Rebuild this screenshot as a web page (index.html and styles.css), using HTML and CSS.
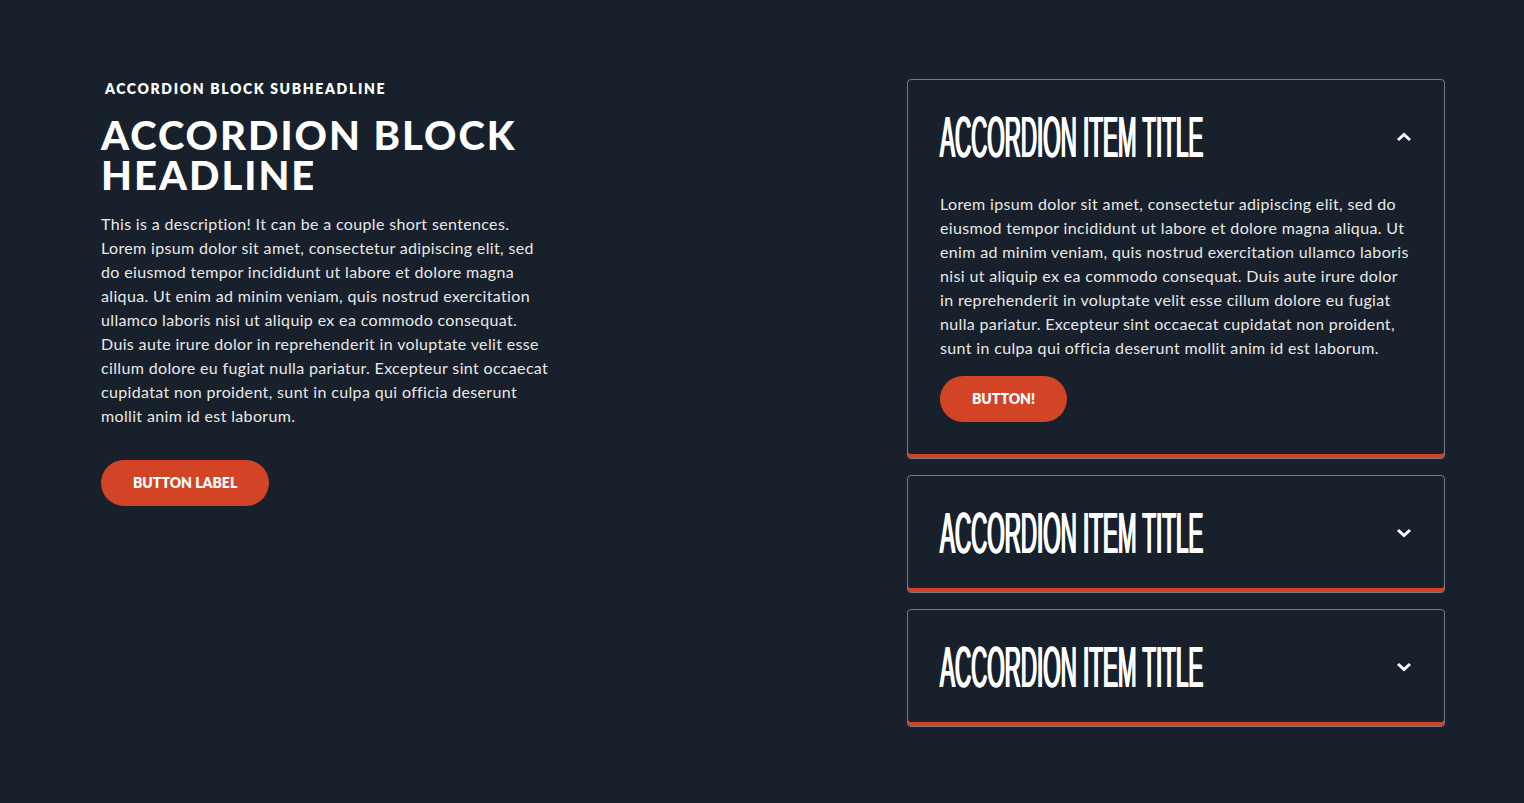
FILE: index.html
```html
<!DOCTYPE html>
<html lang="en">
  <head>
    <title>Accordion Block</title>
    <link rel="stylesheet" href="styles.css">
  </head>
  <body>
    <section class="block">
      <div class="intro">
        <h3 class="subhead">Accordion Block Subheadline</h3>
        <h1 class="headline">Accordion Block Headline</h1>
        <p class="desc">This is a description! It can be a couple short sentences. Lorem ipsum dolor sit amet, consectetur adipiscing elit, sed do eiusmod tempor incididunt ut labore et dolore magna aliqua. Ut enim ad minim veniam, quis nostrud exercitation ullamco laboris nisi ut aliquip ex ea commodo consequat. Duis aute irure dolor in reprehenderit in voluptate velit esse cillum dolore eu fugiat nulla pariatur. Excepteur sint occaecat cupidatat non proident, sunt in culpa qui officia deserunt mollit anim id est laborum.</p>
        <a class="btn" href="#">Button Label</a>
      </div>

      <div class="accordion">
        <div class="item open">
          <div class="item-head">
            <h2 class="item-title"><span>Accordion Item Title</span></h2>
            <svg class="chev" width="16" height="10" viewBox="0 0 16 10"><polyline points="2,8 8,2.5 14,8" fill="none" stroke="#fff" stroke-width="3"/></svg>
          </div>
          <div class="item-body">
            <p>Lorem ipsum dolor sit amet, consectetur adipiscing elit, sed do eiusmod tempor incididunt ut labore et dolore magna aliqua. Ut enim ad minim veniam, quis nostrud exercitation ullamco laboris nisi ut aliquip ex ea commodo consequat. Duis aute irure dolor in reprehenderit in voluptate velit esse cillum dolore eu fugiat nulla pariatur. Excepteur sint occaecat cupidatat non proident, sunt in culpa qui officia deserunt mollit anim id est laborum.</p>
            <a class="btn" href="#">Button!</a>
          </div>
        </div>
        <div class="item">
          <div class="item-head">
            <h2 class="item-title"><span>Accordion Item Title</span></h2>
            <svg class="chev" width="16" height="10" viewBox="0 0 16 10"><polyline points="2,2 8,7.5 14,2" fill="none" stroke="#fff" stroke-width="3"/></svg>
          </div>
        </div>
        <div class="item">
          <div class="item-head">
            <h2 class="item-title"><span>Accordion Item Title</span></h2>
            <svg class="chev" width="16" height="10" viewBox="0 0 16 10"><polyline points="2,2 8,7.5 14,2" fill="none" stroke="#fff" stroke-width="3"/></svg>
          </div>
        </div>
      </div>
    </section>
  </body>
</html>
```

FILE: styles.css
```css
body {
  margin: 0;
  background-color: #18202b;
  color: #e8e8e8;
  font-family: "Lato", "Liberation Sans", sans-serif;
}

.block {
  display: flex;
  justify-content: space-between;
  align-items: flex-start;
  padding: 79px 79px 60px 101px;
}

.intro {
  width: 450px;
}

.subhead {
  margin: 0 0 16px 4px;
  font-size: 14px;
  line-height: 20px;
  font-weight: 800;
  letter-spacing: 1.65px;
  text-transform: uppercase;
  color: #fff;
}

.headline {
  margin: 0;
  font-size: 40px;
  line-height: 40px;
  font-weight: 900;
  letter-spacing: 2px;
  text-transform: uppercase;
  color: #fff;
}

.desc {
  margin: 17px 0 32px;
  font-size: 16px;
  line-height: 24px;
  letter-spacing: 0.35px;
}

.btn {
  display: inline-block;
  height: 46px;
  line-height: 46px;
  padding: 0 32px;
  border-radius: 23px;
  background-color: #d34427;
  color: #fff;
  font-size: 14px;
  font-weight: 800;
  text-transform: uppercase;
  text-decoration: none;
}

.accordion {
  width: 538px;
  display: flex;
  flex-direction: column;
  gap: 16px;
}

.item {
  border: 1px solid #737a83;
  border-radius: 4px;
  box-shadow: inset 0 -4px 0 #d34427;
}

.item-head {
  display: flex;
  align-items: center;
  justify-content: space-between;
  padding: 30px 32px 29px;
}

/* condensed display face: small text stretched tall, stems thickened sideways */
.item-title {
  display: flex;
  align-items: center;
  height: 57px;
  margin: 0;
  font-family: "Liberation Sans", sans-serif;
  font-size: 22.4px;
  line-height: 22px;
  font-weight: 400;
  text-transform: uppercase;
  color: #fff;
  white-space: nowrap;
  text-shadow: 0.7px 0 0 #fff, -0.7px 0 0 #fff;
}

.item-title span {
  display: inline-block;
  transform: scaleY(2.56);
}

.chev {
  display: block;
  flex-shrink: 0;
  margin-bottom: 4px;
}

.open .item-head {
  padding-bottom: 25px;
}

.item-body {
  padding: 0 32px 36px;
}

.item-body p {
  margin: 0 0 16px;
  font-size: 16px;
  line-height: 24px;
  letter-spacing: 0.35px;
}
```
